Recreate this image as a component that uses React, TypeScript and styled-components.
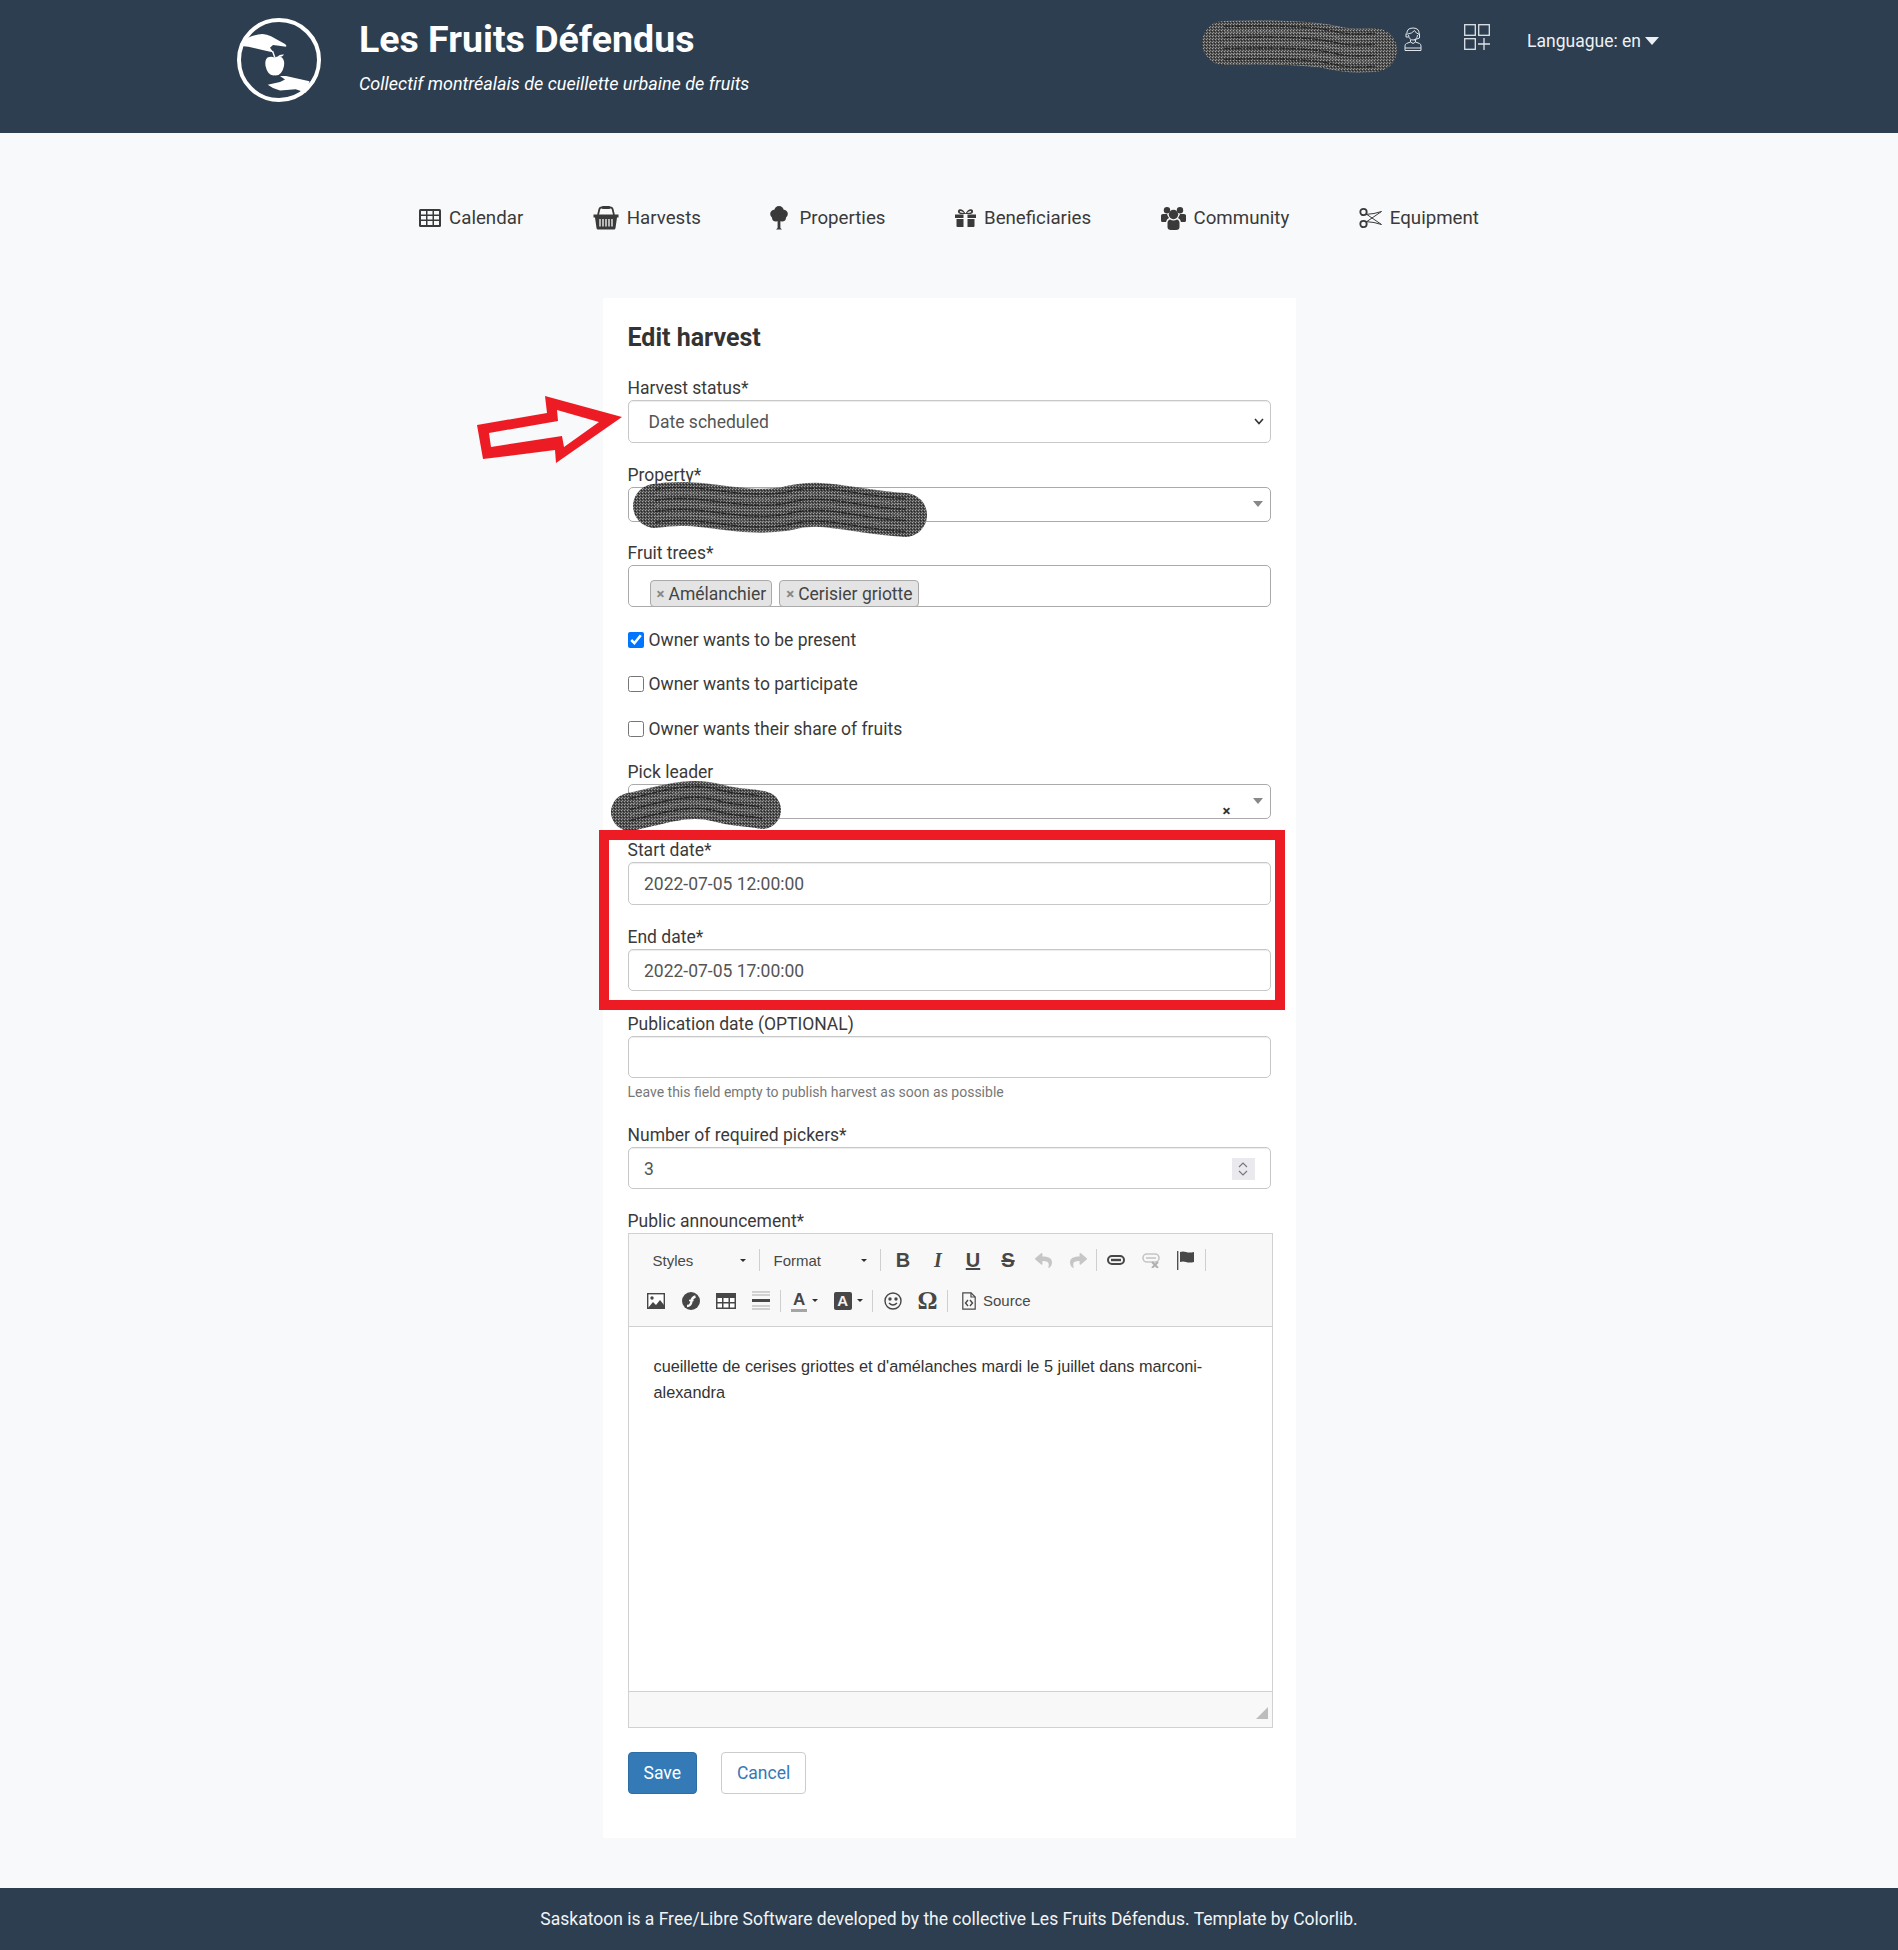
import React from 'react';
import styled, { createGlobalStyle } from 'styled-components';
import { FaReply, FaShare } from 'react-icons/fa';

const GlobalStyle = createGlobalStyle`
  html, body { margin: 0; padding: 0; }
  body {
    background: #f8f9fa;
    color: #3a3a3a;
    font-family: Roboto, "Liberation Sans", sans-serif;
    font-size: 17.5px;
  }
`;

const Page = styled.div`
  position: relative;
  width: 1898px;
  height: 1950px;
  display: flex;
  flex-direction: column;
  overflow: hidden;
`;

/* header */
const Header = styled.header`
  height: 133px;
  flex: none;
  background: #2c3e50;
  color: #fff;
  display: flex;
  align-items: flex-start;
  justify-content: space-between;
  padding: 18px 239px 0 237px;
  box-sizing: border-box;
`;
const Brand = styled.div`
  display: flex;
  gap: 38px;
`;
const BrandText = styled.div`
  padding-top: 0;
`;
const SiteTitle = styled.h1`
  margin: 0;
  font-size: 37.5px;
  line-height: 42px;
  font-weight: 700;
`;
const Tagline = styled.p`
  margin: 11.5px 0 0;
  font-size: 18px;
  line-height: 24px;
  font-style: italic;
`;
const HeaderTools = styled.div`
  display: flex;
  align-items: flex-start;
  color: #dfe4ea;
  padding-top: 6px;
`;
const UserIcon = styled.svg`
  width: 18px;
  height: 24px;
  margin: 3px 42px 0 0;
`;
const AddIcon = styled.svg`
  width: 26px;
  height: 26px;
  margin-right: 37px;
`;
const Lang = styled.div`
  display: flex;
  align-items: center;
  gap: 4px;
  color: #eef1f4;
  line-height: 34px;
  height: 34px;
`;
const LangCaret = styled.span`
  width: 0;
  height: 0;
  border-style: solid;
  border-width: 8px 7px 0;
  border-color: #eef1f4 transparent transparent;
`;

/* nav */
const Nav = styled.nav`
  height: 165px;
  flex: none;
  display: flex;
  justify-content: center;
  align-items: center;
  gap: 69.5px;
  box-sizing: border-box;
  padding-top: 5px;
`;
const NavItem = styled.a<{ $gap?: number }>`
  display: flex;
  align-items: center;
  gap: ${p => p.$gap ?? 8}px;
  font-size: 18.7px;
  color: #3a3a3a;
  line-height: 24px;
  svg { display: block; flex: none; }
`;

/* form card */
const Card = styled.main`
  width: 693px;
  height: 1540px;
  flex: none;
  margin: 0 auto;
  background: #fff;
  box-sizing: border-box;
  padding: 26px 25px 0;
`;
const CardTitle = styled.h2`
  margin: 0 0 23px;
  font-size: 25px;
  line-height: 28px;
  font-weight: 700;
  color: #333;
`;
const Field = styled.div<{ $mb?: number }>`
  margin-bottom: ${p => p.$mb ?? 20}px;
`;
const Label = styled.label`
  display: block;
  line-height: 24px;
  padding-top: 0.5px;
`;
const SelectWrap = styled.div`
  position: relative;
`;
const Select = styled.select`
  display: block;
  appearance: none;
  width: 100%;
  height: 43px;
  box-sizing: border-box;
  border: 1px solid #c8c8c8;
  border-radius: 5px;
  padding: 2px 20px 0;
  background: #fff;
  color: #555;
  font: inherit;
  box-shadow: inset 0 1px 1px rgba(0, 0, 0, 0.075);
`;
const Chevron = styled.svg`
  position: absolute;
  right: 7px;
  top: 18px;
  pointer-events: none;
`;
const TextBox = styled.div<{ $h?: number }>`
  display: flex;
  align-items: center;
  justify-content: space-between;
  width: 100%;
  height: ${p => p.$h ?? 42.5}px;
  box-sizing: border-box;
  border: 1px solid #c8c8c8;
  border-radius: 5px;
  padding: 1.5px 15px 0 15.5px;
  background: #fff;
  color: #555;
  box-shadow: inset 0 1px 1px rgba(0, 0, 0, 0.075);
`;
const Spinner = styled.div`
  width: 23px;
  height: 22px;
  background: #e9e9ee;
  display: flex;
  align-items: center;
  justify-content: center;
  svg { display: block; }
`;
const ComboBox = styled.div`
  position: relative;
  height: 35px;
  box-sizing: border-box;
  border: 1px solid #aaa;
  border-radius: 5px;
  background: #fff;
`;
const ComboArrow = styled.span`
  position: absolute;
  right: 7px;
  top: 13px;
  width: 0;
  height: 0;
  border-style: solid;
  border-width: 6px 5px 0;
  border-color: #888 transparent transparent;
`;
const ComboClear = styled.span`
  position: absolute;
  right: 39px;
  top: 18px;
  font-size: 15px;
  line-height: 17px;
  font-weight: 700;
  color: #333;
`;
const TagBox = styled.div`
  display: flex;
  align-items: flex-end;
  gap: 7px;
  height: 42px;
  box-sizing: border-box;
  border: 1px solid #aaa;
  border-radius: 5px;
  padding-left: 21px;
  background: #fff;
`;
const Tag = styled.span`
  display: flex;
  align-items: center;
  height: 27px;
  box-sizing: border-box;
  border: 1px solid #aaa;
  border-radius: 4px;
  background: #e4e4e4;
  padding: 0 5px 0 6px;
  color: #444;
  font-size: 17.5px;
  margin-bottom: -1px;
`;
const TagX = styled.span`
  color: #888;
  font-weight: 700;
  font-size: 15px;
  margin-right: 4px;
`;
const CheckRow = styled.label<{ $mb?: number }>`
  display: flex;
  align-items: center;
  gap: 5px;
  line-height: 24px;
  margin-bottom: ${p => p.$mb ?? 20.5}px;
`;
const Check = styled.input`
  width: 16px;
  height: 16px;
  margin: 0;
`;
const Help = styled.small`
  display: block;
  margin-top: 5px;
  font-size: 14px;
  line-height: 18px;
  color: #777;
`;

/* rich text editor */
const Editor = styled.div`
  width: 645px;
  height: 495px;
  box-sizing: border-box;
  border: 1px solid #d1d1d1;
  display: flex;
  flex-direction: column;
  font-family: "Liberation Sans", Arial, sans-serif;
  color: #474747;
`;
const Toolbar = styled.div`
  height: 93.5px;
  flex: none;
  box-sizing: border-box;
  background: #f8f8f8;
  border-bottom: 1px solid #d1d1d1;
`;
const ToolRow = styled.div`
  display: flex;
  align-items: center;
  height: 40px;
  padding-left: 9.5px;
  &:first-child { margin-top: 6px; height: 41px; padding-left: 10px; }
`;
const Combo = styled.div<{ $w: number }>`
  width: ${p => p.$w}px;
  display: flex;
  align-items: center;
  justify-content: space-between;
  box-sizing: border-box;
  padding: 0 13px 0 14px;
  font-size: 15px;
  color: #484848;
`;
const SmallCaret = styled.span`
  width: 0;
  height: 0;
  border-style: solid;
  border-width: 3.5px 3.5px 0;
  border-color: #2f2f2f transparent transparent;
`;
const Sep = styled.span<{ $ml?: number; $mr?: number }>`
  width: 1px;
  height: 22px;
  flex: none;
  background: #cfcfcf;
  margin-left: ${p => p.$ml ?? 2}px;
  margin-right: ${p => p.$mr ?? 2}px;
`;
const ToolBtn = styled.span<{ $w?: number; $off?: boolean }>`
  width: ${p => p.$w ?? 35}px;
  height: 24px;
  flex: none;
  display: flex;
  align-items: center;
  justify-content: center;
  gap: 5px;
  color: ${p => (p.$off ? '#c6c6c6' : '#474747')};
  svg { display: block; }
`;
const Glyph = styled.span<{ $kind: 'b' | 'i' | 'u' | 's' | 'o' }>`
  font-size: ${p => (p.$kind === 'o' ? 25 : 20)}px;
  line-height: 22px;
  font-weight: 700;
  font-style: ${p => (p.$kind === 'i' ? 'italic' : 'normal')};
  font-family: ${p => (p.$kind === 'i' || p.$kind === 'o' ? '"Liberation Serif", serif' : '"Liberation Sans", sans-serif')};
  text-decoration: ${p => (p.$kind === 'u' ? 'underline' : p.$kind === 's' ? 'line-through' : 'none')};
`;
const ColorA = styled.span`
  font-weight: 700;
  font-size: 17px;
  line-height: 19px;
  border-bottom: 3px solid #a5a5a5;
  padding: 0 2px;
`;
const BgA = styled.span`
  font-weight: 700;
  font-size: 15px;
  line-height: 18px;
  width: 18px;
  text-align: center;
  border-radius: 2px;
  color: #f2f2f2;
  background: #474747;
`;
const SourceBtn = styled.span`
  display: flex;
  align-items: center;
  gap: 7px;
  margin-left: 12px;
  font-size: 15px;
  color: #484848;
  svg { display: block; }
`;
const EditArea = styled.div`
  flex: 1;
  background: #fff;
  box-sizing: border-box;
  padding: 25.5px 48px 0 25px;
  font-size: 16.3px;
  line-height: 26px;
  color: #333;
`;
const EditorFoot = styled.div`
  height: 36px;
  flex: none;
  box-sizing: border-box;
  position: relative;
  background: #f8f8f8;
  border-top: 1px solid #d1d1d1;
`;
const Grip = styled.span`
  position: absolute;
  right: 4px;
  bottom: 8px;
  width: 0;
  height: 0;
  border-style: solid;
  border-width: 0 0 12px 12px;
  border-color: transparent transparent #bdbdbd;
`;
const Actions = styled.div`
  display: flex;
  gap: 24px;
  margin-top: 24px;
`;
const Btn = styled.a<{ $primary?: boolean }>`
  height: 42px;
  box-sizing: border-box;
  display: flex;
  align-items: center;
  padding: 0 15px;
  border-radius: 4px;
  border: 1px solid ${p => (p.$primary ? '#2e6da4' : '#ccc')};
  background: ${p => (p.$primary ? '#337ab7' : '#fff')};
  color: ${p => (p.$primary ? '#fff' : '#337ab7')};
`;

const Footer = styled.footer`
  margin-top: auto;
  height: 62px;
  flex: none;
  display: flex;
  align-items: center;
  justify-content: center;
  background: #2c3e50;
  color: #f1f3f5;
`;

/* annotations that were painted on top of the page */
const Annotations = styled.svg`
  position: absolute;
  left: 0;
  top: 0;
  pointer-events: none;
`;

const Scribble = ({ id, d, width }: { id: string; d: string; width: number }) => {
  const offsets = [];
  for (let o = -width / 2; o <= width / 2; o += 5.5) offsets.push(o);
  return (
    <g>
      <mask id={id} maskUnits="userSpaceOnUse" x="0" y="0" width="1898" height="1950">
        <path d={d} fill="none" stroke="#fff" strokeWidth={width} strokeLinecap="round" />
      </mask>
      <g mask={`url(#${id})`}>
        <path d={d} fill="none" stroke="url(#scribbleDots)" strokeWidth={width + 2} strokeLinecap="round" />
        {offsets.map((o, i) => (
          <path
            key={o}
            d={d}
            transform={`translate(0 ${o})`}
            fill="none"
            stroke={i % 2 ? '#1c1c1c' : '#a8a8a8'}
            strokeOpacity={i % 2 ? 0.8 : 0.45}
            strokeWidth={i % 2 ? 1.4 : 1}
            strokeDasharray="6 1 3 1"
          />
        ))}
      </g>
    </g>
  );
};

const Logo = () => (
  <svg width="84" height="84" viewBox="0 0 84 84" style={{ flex: 'none' }}>
    <circle cx="42" cy="42" r="40" fill="none" stroke="#fff" strokeWidth="4" />
    <path d="M3.8 25.2 L11.5 19.4 Q18 16.5 25.4 15.9 Q30 16 34 18.3 L48 26 Q50 27.5 49 28.7 L42 27.7 L36 27 L33 29.7 L36.6 34.6 L25.4 32 L11.5 28.7 L4 28 Z" fill="#fff" />
    <path d="M35.5 33 L37.8 39.5" stroke="#fff" strokeWidth="1.4" fill="none" />
    <path d="M37.5 39.5 Q42 37.5 45 39.5 Q48 42.5 47 48 Q45 57.5 38.5 57.5 Q37.5 57 36.5 57.5 Q30.5 57 28.5 48 Q27.5 42 30.5 39.5 Q34 38 37.5 39.5 Z" fill="#fff" />
    <path d="M40.5 38.5 Q43 36 47 36.5 Q45.5 39 41.5 39 Z" fill="#fff" />
    <path d="M30.7 66.7 L43 64 L48 61.5 L43 58 L49 58 L56.8 59.8 L72.5 63.3 L69 74.7 L58.7 71.2 L43 72.6 L36 70 Z" fill="#fff" />
  </svg>
);

const CalendarIcon = () => (
  <svg width="22" height="18" viewBox="0 0 22 18">
    <rect width="22" height="18" rx="1.5" fill="currentColor" />
    <path d="M2 2 H7 V5.5 H2 Z M8.5 2 H13.5 V5.5 H8.5 Z M15 2 H20 V5.5 H15 Z M2 7 H7 V10.5 H2 Z M8.5 7 H13.5 V10.5 H8.5 Z M15 7 H20 V10.5 H15 Z M2 12 H7 V16 H2 Z M8.5 12 H13.5 V16 H8.5 Z M15 12 H20 V16 H15 Z" fill="#f8f9fa" />
  </svg>
);

const Basket = () => (
  <svg width="26" height="24" viewBox="0 0 26 24">
    <path d="M5 9 L6.5 2.8 Q7 1.5 8.5 1.5 L17.5 1.5 Q19 1.5 19.5 2.8 L21 9" fill="none" stroke="currentColor" strokeWidth="1.8" />
    <rect x="9" y="0" width="8" height="3" rx="1" fill="currentColor" />
    <path d="M0.5 8.5 H25.5 V11.5 H24 L22.5 22 Q22.3 23.5 21 23.5 H5 Q3.7 23.5 3.5 22 L2 11.5 H0.5 Z" fill="currentColor" />
    <path d="M7 13 V20.5 M10 13 V20.5 M13 13 V20.5 M16 13 V20.5 M19 13 V20.5" stroke="#f8f9fa" strokeWidth="1.3" />
  </svg>
);

const Tree = () => (
  <svg width="18" height="24" viewBox="0 0 18 24" fill="currentColor">
    <circle cx="9" cy="4.8" r="4.8" />
    <circle cx="4.4" cy="8" r="4.2" />
    <circle cx="13.6" cy="8" r="4.2" />
    <circle cx="6" cy="11.5" r="4" />
    <circle cx="12" cy="11.5" r="4" />
    <path d="M7.6 13 H10.4 V22 L12 23.5 H6 L7.6 22 Z" />
  </svg>
);

const GiftIcon = () => (
  <svg width="21" height="18" viewBox="0 0 21 18" fill="currentColor">
    <path fillRule="evenodd" d="M10.5 4.5 Q8 0 5 0.2 Q2.5 0.6 3 3 Q3.5 5 7 5 H14 Q17.5 5 18 3 Q18.5 0.6 16 0.2 Q13 0 10.5 4.5 Z M9 4 Q7 1.8 5.3 2 Q4.5 2.3 5 3.2 Q5.7 4 9 4 Z M12 4 Q14 1.8 15.7 2 Q16.5 2.3 16 3.2 Q15.3 4 12 4 Z" />
    <path d="M0 5.5 H8.5 V9 H0 Z M12.5 5.5 H21 V9 H12.5 Z M1.5 10 H8.5 V18 H2.5 Q1.5 18 1.5 17 Z M12.5 10 H19.5 V17 Q19.5 18 18.5 18 H12.5 Z" />
  </svg>
);

const PeopleIcon = () => (
  <svg width="25" height="23" viewBox="0 0 25 23" fill="currentColor">
    <circle cx="6" cy="3.2" r="3.2" />
    <circle cx="19" cy="3.2" r="3.2" />
    <path d="M0 8.5 Q0 7 2 7 H6 Q6.6 9 8 11 Q5.5 12 5 15 H1.5 Q0 15 0 13.5 Z M25 8.5 Q25 7 23 7 H19 Q18.4 9 17 11 Q19.5 12 20 15 H23.5 Q25 15 25 13.5 Z" />
    <circle cx="12.5" cy="7.5" r="4.7" />
    <path d="M6.5 16 Q6.5 13 9 12.5 Q12.5 14.5 16 12.5 Q18.5 13 18.5 16 V20 Q18.5 23 15 23 H10 Q6.5 23 6.5 20 Z" />
  </svg>
);

const Shears = () => (
  <svg width="23" height="22" viewBox="0 0 23 22" fill="none" stroke="currentColor" strokeWidth="1.8">
    <circle cx="4.5" cy="5" r="3.2" />
    <circle cx="4.5" cy="17" r="3.2" />
    <path d="M7.2 7 L22.5 17.5 L15 15.5 L7 14.6" strokeWidth="1" />
    <path d="M7.2 15 L22.5 4.5 L15 6.5 L7 7.4" strokeWidth="1" />
  </svg>
);

const ChainIcon = () => (
  <svg width="18" height="10" viewBox="0 0 18 10" fill="none" stroke="currentColor" strokeWidth="2">
    <rect x="1" y="1" width="16" height="8" rx="4" />
    <path d="M4 5 H14" strokeWidth="2.4" />
  </svg>
);
const UnchainIcon = () => (
  <svg width="18" height="15" viewBox="0 0 18 15" fill="none" stroke="currentColor" strokeWidth="1.6">
    <rect x="1" y="1" width="16" height="8" rx="4" />
    <path d="M4 5 H14" />
    <path d="M10 9 L16 15 M16 9 L10 15" stroke="#b0b0b0" strokeWidth="2" />
  </svg>
);
const FlagIcon = () => (
  <svg width="17" height="19" viewBox="0 0 17 19">
    <path d="M0.7 0 V19" stroke="currentColor" strokeWidth="1.3" />
    <path d="M3 1 Q6 0 9 1 Q12 2 17 1 V11 Q12 12 9 11 Q6 10 3 11 Z" fill="currentColor" />
  </svg>
);
const ImageIcon = () => (
  <svg width="18" height="16" viewBox="0 0 18 16">
    <rect x="0.7" y="0.7" width="16.6" height="14.6" fill="#fff" stroke="currentColor" strokeWidth="1.4" />
    <circle cx="5" cy="5" r="1.7" fill="currentColor" />
    <path d="M1 15 L6 9 L9 12 L13 7 L17 12 V15 Z" fill="currentColor" />
  </svg>
);
const FlashIcon = () => (
  <svg width="18" height="18" viewBox="0 0 18 18">
    <circle cx="9" cy="9" r="9" fill="currentColor" />
    <path d="M5 14 Q9 14 9.5 9 Q10 5.5 13.5 4.5" fill="none" stroke="#f8f8f8" strokeWidth="2.4" />
    <path d="M7 8.5 H11.5" stroke="#f8f8f8" strokeWidth="1.6" />
  </svg>
);
const GridIcon = () => (
  <svg width="20" height="16" viewBox="0 0 20 16">
    <rect x="0" y="0" width="20" height="16" fill="currentColor" />
    <path d="M1.5 5 H6 V9 H1.5 Z M7.5 5 H12.5 V9 H7.5 Z M14 5 H18.5 V9 H14 Z M1.5 10.5 H6 V14.5 H1.5 Z M7.5 10.5 H12.5 V14.5 H7.5 Z M14 10.5 H18.5 V14.5 H14 Z" fill="#fff" />
  </svg>
);
const RuleIcon = () => (
  <svg width="18" height="19" viewBox="0 0 18 19" fill="none" stroke="currentColor">
    <path d="M0 1 H18 M0 4 H18 M0 15 H18 M0 18 H18" stroke="#a9a9a9" strokeWidth="1" />
    <path d="M0 9.5 H18" strokeWidth="3" />
  </svg>
);
const SmileIcon = () => (
  <svg width="18" height="18" viewBox="0 0 18 18" fill="none" stroke="currentColor" strokeWidth="1.4">
    <circle cx="9" cy="9" r="8" />
    <circle cx="6" cy="7" r="1" fill="currentColor" />
    <circle cx="12" cy="7" r="1" fill="currentColor" />
    <path d="M5 11 Q9 15 13 11" />
  </svg>
);
const SourceIcon = () => (
  <svg width="14" height="18" viewBox="0 0 14 18" fill="none" stroke="currentColor" strokeWidth="1.2">
    <path d="M0.8 0.8 H9 L13.2 5 V17.2 H0.8 Z" />
    <path d="M9 0.8 V5 H13.2" />
    <path d="M6 8 L3.5 11 L6 14 M8 8 L10.5 11 L8 14" strokeWidth="1.4" />
  </svg>
);

const App = () => (
  <Page>
    <GlobalStyle />
    <Header>
      <Brand>
        <Logo />
        <BrandText>
          <SiteTitle>Les Fruits Défendus</SiteTitle>
          <Tagline>Collectif montréalais de cueillette urbaine de fruits</Tagline>
        </BrandText>
      </Brand>
      <HeaderTools>
        <UserIcon viewBox="0 0 18 24" fill="none" stroke="currentColor" strokeWidth="1">
          <path d="M3 8 Q2 1 9 1 Q16 1 15 8" />
          <path d="M4 7 Q8 6.5 10.5 3.5 Q12 6.5 14.5 7 M2 6.5 V10 H4.5 M15.5 6.5 V11 L10 13" />
          <path d="M4.5 8 Q5 13 9 13 Q13 13 13.5 8" />
          <path d="M6.5 13 V15 L2.5 16.5 Q1 17 1 19 V23.5 H17 V19 Q17 17 15.5 16.5 L11.5 15 V13" />
          <path d="M6.5 15 Q9 18 11.5 15 M1 21 H17" />
        </UserIcon>
        <AddIcon viewBox="0 0 26 26" fill="none" stroke="currentColor" strokeWidth="1.3">
          <rect x="0.7" y="0.7" width="10.6" height="10.6" />
          <rect x="14.7" y="0.7" width="10.6" height="10.6" />
          <rect x="0.7" y="14.7" width="10.6" height="10.6" />
          <path d="M14 20 H26 M20 14 V26" />
        </AddIcon>
        <Lang>
          Languague: en
          <LangCaret />
        </Lang>
      </HeaderTools>
    </Header>

    <Nav>
      <NavItem><CalendarIcon />Calendar</NavItem>
      <NavItem><Basket />Harvests</NavItem>
      <NavItem $gap={11}><Tree />Properties</NavItem>
      <NavItem><GiftIcon />Beneficiaries</NavItem>
      <NavItem><PeopleIcon />Community</NavItem>
      <NavItem><Shears />Equipment</NavItem>
    </Nav>

    <Card>
      <CardTitle>Edit harvest</CardTitle>
      <Field>
        <Label>Harvest status*</Label>
        <SelectWrap>
          <Select defaultValue="scheduled">
            <option value="scheduled">Date scheduled</option>
          </Select>
          <Chevron width="10" height="7" viewBox="0 0 10 7" fill="none" stroke="#333" strokeWidth="1.6">
            <path d="M1 1 L5 5.5 L9 1" />
          </Chevron>
        </SelectWrap>
      </Field>
      <Field $mb={18.5}>
        <Label>Property*</Label>
        <ComboBox><ComboArrow /></ComboBox>
      </Field>
      <Field $mb={20.5}>
        <Label>Fruit trees*</Label>
        <TagBox>
          <Tag><TagX>×</TagX>Amélanchier</Tag>
          <Tag><TagX>×</TagX>Cerisier griotte</Tag>
        </TagBox>
      </Field>
      <CheckRow><Check type="checkbox" defaultChecked />Owner wants to be present</CheckRow>
      <CheckRow><Check type="checkbox" />Owner wants to participate</CheckRow>
      <CheckRow $mb={18.5}><Check type="checkbox" />Owner wants their share of fruits</CheckRow>
      <Field $mb={19}>
        <Label>Pick leader</Label>
        <ComboBox><ComboClear>×</ComboClear><ComboArrow /></ComboBox>
      </Field>
      <Field $mb={19.5}>
        <Label>Start date*</Label>
        <TextBox>2022-07-05 12:00:00</TextBox>
      </Field>
      <Field>
        <Label>End date*</Label>
        <TextBox>2022-07-05 17:00:00</TextBox>
      </Field>
      <Field $mb={21}>
        <Label>Publication date (OPTIONAL)</Label>
        <TextBox />
        <Help>Leave this field empty to publish harvest as soon as possible</Help>
      </Field>
      <Field $mb={19}>
        <Label>Number of required pickers*</Label>
        <TextBox>
          3
          <Spinner>
            <svg width="10" height="16" viewBox="0 0 10 16" fill="none" stroke="#777" strokeWidth="1.1">
              <path d="M1 6 L5 2 L9 6 M1 10 L5 14 L9 10" />
            </svg>
          </Spinner>
        </TextBox>
      </Field>
      <Label>Public announcement*</Label>
      <Editor>
        <Toolbar>
          <ToolRow>
            <Combo $w={120}>Styles<SmallCaret /></Combo>
            <Sep $ml={0} $mr={0} />
            <Combo $w={120}>Format<SmallCaret /></Combo>
            <Sep $ml={0} $mr={5} />
            <ToolBtn><Glyph $kind="b">B</Glyph></ToolBtn>
            <ToolBtn><Glyph $kind="i">I</Glyph></ToolBtn>
            <ToolBtn><Glyph $kind="u">U</Glyph></ToolBtn>
            <ToolBtn><Glyph $kind="s">S</Glyph></ToolBtn>
            <ToolBtn $off><FaReply size={17} /></ToolBtn>
            <ToolBtn $off><FaShare size={17} /></ToolBtn>
            <Sep $ml={0} $mr={1.5} />
            <ToolBtn><ChainIcon /></ToolBtn>
            <ToolBtn $off><UnchainIcon /></ToolBtn>
            <ToolBtn><FlagIcon /></ToolBtn>
            <Sep />
          </ToolRow>
          <ToolRow>
            <ToolBtn><ImageIcon /></ToolBtn>
            <ToolBtn><FlashIcon /></ToolBtn>
            <ToolBtn><GridIcon /></ToolBtn>
            <ToolBtn><RuleIcon /></ToolBtn>
            <Sep />
            <ToolBtn $w={43.5}><ColorA>A</ColorA><SmallCaret /></ToolBtn>
            <ToolBtn $w={43.5}><BgA>A</BgA><SmallCaret /></ToolBtn>
            <Sep />
            <ToolBtn><SmileIcon /></ToolBtn>
            <ToolBtn><Glyph $kind="o">Ω</Glyph></ToolBtn>
            <Sep />
            <SourceBtn><SourceIcon />Source</SourceBtn>
          </ToolRow>
        </Toolbar>
        <EditArea>cueillette de cerises griottes et d'amélanches mardi le 5 juillet dans marconi-alexandra</EditArea>
        <EditorFoot><Grip /></EditorFoot>
      </Editor>
      <Actions>
        <Btn $primary>Save</Btn>
        <Btn>Cancel</Btn>
      </Actions>
    </Card>

    <Footer>Saskatoon is a Free/Libre Software developed by the collective Les Fruits Défendus. Template by Colorlib.</Footer>

    <Annotations width="1898" height="1950" viewBox="0 0 1898 1950">
      <defs>
        <pattern id="scribbleDots" width="3" height="3" patternUnits="userSpaceOnUse">
          <rect width="3" height="3" fill="#4e4e4e" />
          <rect x="0" y="0" width="1" height="1" fill="#a4a4a4" />
          <rect x="2" y="1" width="1" height="1" fill="#262626" />
          <rect x="1" y="2" width="1" height="1" fill="#8a8a8a" />
        </pattern>
      </defs>
      <Scribble id="sTop" d="M1224 43 C1270 42 1310 42 1335 48 C1350 52 1362 50 1375 50" width="44" />
      <Scribble id="sProperty" d="M655 506 C700 498 735 516 785 509 C825 498 850 512 905 515" width="44" />
      <Scribble id="sLeader" d="M630 812 C665 804 690 795 718 803 C735 808 748 807 762 810" width="38" />
      <path fillRule="evenodd" fill="#ed1c24" d="M477 425 L547 413 L545 396 L622 417 L556 463 L555 450 L483 459 Z M489 433 L491 447 L562 436 L564 447 L599 422 L557 410 L558 421 Z" />
      <rect x="604" y="835" width="676" height="170" fill="none" stroke="#ed1c24" strokeWidth="10" />
    </Annotations>
  </Page>
);

export default App;
